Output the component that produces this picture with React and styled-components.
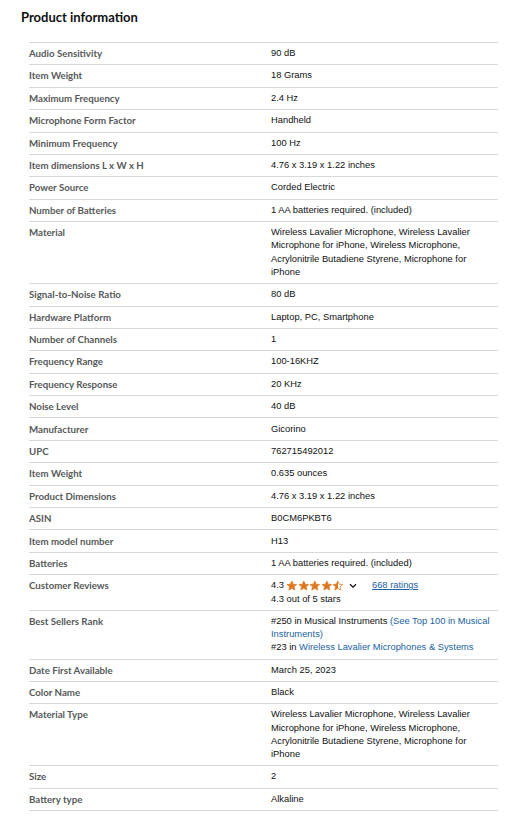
import * as React from 'react';
import styled, { createGlobalStyle } from 'styled-components';

const GlobalStyle = createGlobalStyle`
    body {
        margin: 0;
        background: #ffffff;
    }
`;

const MATERIAL =
    'Wireless Lavalier Microphone, Wireless Lavalier Microphone for iPhone, Wireless Microphone, Acrylonitrile Butadiene Styrene, Microphone for iPhone';

const ROWS = [
    ['Audio Sensitivity', '90 dB'],
    ['Item Weight', '18 Grams'],
    ['Maximum Frequency', '2.4 Hz'],
    ['Microphone Form Factor', 'Handheld'],
    ['Minimum Frequency', '100 Hz'],
    ['Item dimensions L x W x H', '4.76 x 3.19 x 1.22 inches'],
    ['Power Source', 'Corded Electric'],
    ['Number of Batteries', '1 AA batteries required. (included)'],
    ['Material', MATERIAL],
    ['Signal-to-Noise Ratio', '80 dB'],
    ['Hardware Platform', 'Laptop, PC, Smartphone'],
    ['Number of Channels', '1'],
    ['Frequency Range', '100-16KHZ'],
    ['Frequency Response', '20 KHz'],
    ['Noise Level', '40 dB'],
    ['Manufacturer', 'Gicorino'],
    ['UPC', '762715492012'],
    ['Item Weight', '0.635 ounces'],
    ['Product Dimensions', '4.76 x 3.19 x 1.22 inches'],
    ['ASIN', 'B0CM6PKBT6'],
    ['Item model number', 'H13'],
    ['Batteries', '1 AA batteries required. (included)'],
    ['Customer Reviews', 'reviews'],
    ['Best Sellers Rank', 'rank'],
    ['Date First Available', 'March 25, 2023'],
    ['Color Name', 'Black'],
    ['Material Type', MATERIAL],
    ['Size', '2'],
    ['Battery type', 'Alkaline'],
];

// page section
const Section = styled.section`
    padding: 9px 21px 0 21px;
`;

const Title = styled.h2`
    margin: 0 0 16px 0;
    font-family: Lato, 'Open Sans', sans-serif;
    font-weight: 700;
    font-size: 13px;
    line-height: 17px;
    color: #0f1111;
`;

// table of specs
const SpecTable = styled.div`
    margin-left: 8px;
    width: 469px;
    border-top: 1px solid #d5d9d9;
`;

const SpecRow = styled.div`
    display: grid;
    grid-template-columns: 242px 1fr;
    align-items: start;
    border-bottom: 1px solid #d5d9d9;
    padding: 4.1px 0;
`;

// label sits a hair higher so its baseline meets the value's
const Label = styled.div`
    font-family: Lato, 'Open Sans', sans-serif;
    font-weight: 700;
    font-size: 9.7px;
    line-height: 12.2px;
    color: #565959;
`;

const Value = styled.div`
    padding-right: 3px;
    font-family: 'Liberation Sans', Arial, sans-serif;
    font-size: 9.35px;
    line-height: 13.2px;
    color: #0f1111;
`;

const Link = styled.a`
    color: #2162a1;
    text-decoration: ${(props) => (props.underline ? 'underline' : 'none')};
    cursor: pointer;
`;

const RatingLine = styled.div`
    display: flex;
    align-items: center;
`;

const Stars = styled.span`
    display: inline-flex;
    margin-left: 2px;
`;

const Chevron = styled.svg`
    margin-left: 5px;
    margin-right: 15px;
`;

const STAR =
    'M12 2.2l2.9 6.6 7.1.6-5.4 4.7 1.6 7-6.2-3.8-6.2 3.8 1.6-7L2 9.4l7.1-.6z';

const Star = ({ half }) => (
    <svg width="11.6" height="11" viewBox="0 0 24 23">
        <defs>
            <linearGradient id="halfFill" x1="0" x2="1" y1="0" y2="0">
                <stop offset="50%" stopColor="#de7921" />
                <stop offset="50%" stopColor="#ffffff" />
            </linearGradient>
        </defs>
        <path
            d={STAR}
            fill={half ? 'url(#halfFill)' : '#de7921'}
            stroke="#de7921"
            strokeWidth="1.6"
            strokeLinejoin="round"
        />
    </svg>
);

const Reviews = () => (
    <>
        <RatingLine>
            <span>4.3</span>
            <Stars>
                <Star />
                <Star />
                <Star />
                <Star />
                <Star half />
            </Stars>
            <Chevron width="8" height="6" viewBox="0 0 8 6">
                <path
                    d="M1 1.2l3 3 3-3"
                    fill="none"
                    stroke="#0f1111"
                    strokeWidth="1.3"
                />
            </Chevron>
            <Link underline>668 ratings</Link>
        </RatingLine>
        <div>4.3 out of 5 stars</div>
    </>
);

const Rank = () => (
    <>
        <div>
            #250 in Musical Instruments{' '}
            <Link>(See Top 100 in Musical Instruments)</Link>
        </div>
        <div>
            #23 in <Link>Wireless Lavalier Microphones &amp; Systems</Link>
        </div>
    </>
);

const renderValue = (value) => {
    if (value === 'reviews') return <Reviews />;
    if (value === 'rank') return <Rank />;
    return value;
};

const App = () => (
    <>
        <GlobalStyle />
        <Section>
            <Title>Product information</Title>
            <SpecTable>
                {ROWS.map(([label, value], i) => (
                    <SpecRow key={i}>
                        <Label>{label}</Label>
                        <Value>{renderValue(value)}</Value>
                    </SpecRow>
                ))}
            </SpecTable>
        </Section>
    </>
);

export default App;
